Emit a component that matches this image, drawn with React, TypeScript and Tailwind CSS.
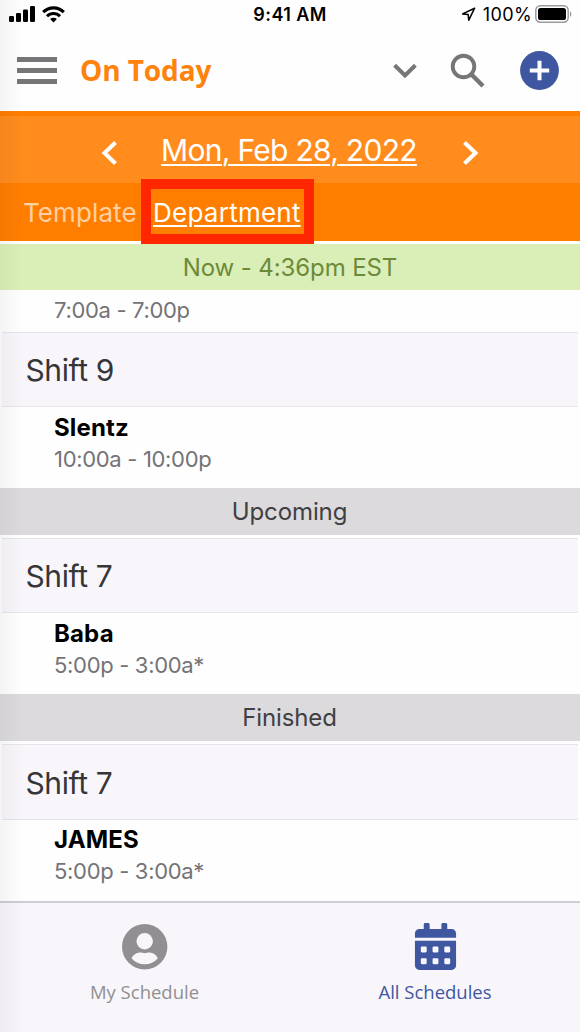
import { FaCalendarAlt } from "react-icons/fa";
import clsx from "clsx";

interface IEntry {
  name?: string;
  time: string;
}

interface IShift {
  title: string;
  entries: IEntry[];
}

interface ISection {
  label: string;
  shifts: IShift[];
}

const sections: ISection[] = [
  {
    label: "Upcoming",
    shifts: [
      { title: "Shift 7", entries: [{ name: "Baba", time: "5:00p - 3:00a*" }] },
    ],
  },
  {
    label: "Finished",
    shifts: [
      {
        title: "Shift 7",
        entries: [{ name: "JAMES", time: "5:00p - 3:00a*" }],
      },
    ],
  },
];

const StatusBar = () => (
  <div className="flex h-7 shrink-0 items-center justify-between pl-[9px] pr-[9px] text-black">
    <div className="flex w-[200px] items-center gap-[7px]">
      <svg width="26" height="16" viewBox="0 0 26 16" fill="currentColor">
        <rect x="0" y="10" width="5" height="6" rx="1.3" />
        <rect x="7" y="7" width="5" height="9" rx="1.3" />
        <rect x="14" y="3.5" width="5" height="12.5" rx="1.3" />
        <rect x="21" y="0" width="5" height="16" rx="1.3" />
      </svg>
      <svg width="23" height="17" viewBox="0 0 23 17" fill="none">
        <path
          d="M1.2 6.1a14.6 14.6 0 0 1 20.6 0"
          stroke="currentColor"
          strokeWidth="3.2"
        />
        <path
          d="M5 10.2a9.2 9.2 0 0 1 13 0"
          stroke="currentColor"
          strokeWidth="3"
        />
        <path d="M11.5 16.5l-3.4-3.4a4.8 4.8 0 0 1 6.8 0z" fill="currentColor" />
      </svg>
    </div>
    <span className="whitespace-nowrap text-[18px] font-semibold tracking-[0.4px]">
      9:41 AM
    </span>
    <div className="flex w-[200px] items-center justify-end">
      <svg width="15" height="15" viewBox="0 0 15 15" fill="none">
        <path
          d="M13.6 1.2L1.6 6.9l5.6.6.5 5.8z"
          stroke="currentColor"
          strokeWidth="1.5"
          strokeLinejoin="round"
        />
      </svg>
      <span className="ml-[7px] text-[18px] tracking-[0.4px]">100%</span>
      <svg
        className="-mr-px ml-[3px]"
        width="37"
        height="18"
        viewBox="0 0 37 18"
        fill="none"
      >
        <rect
          x="0.8"
          y="0.8"
          width="32.4"
          height="16.4"
          rx="4.6"
          stroke="#9b9b9b"
          strokeWidth="1.5"
        />
        <rect x="3" y="3" width="28" height="12" rx="2.6" fill="currentColor" />
        <path d="M35 6.2c1.8.8 1.8 4.8 0 5.6z" fill="#9b9b9b" />
      </svg>
    </div>
  </div>
);

const Header = () => (
  <header className="flex h-[83px] shrink-0 items-center pl-[17px] pr-[21px] pt-0.5 text-[#767577]">
    <button className="flex flex-col gap-[6.5px]">
      <span className="h-[4.5px] w-10 bg-current" />
      <span className="h-[4.5px] w-10 bg-current" />
      <span className="h-[4.5px] w-10 bg-current" />
    </button>
    <h1 className="-mt-0.5 ml-[23px] flex-1 font-['Open_Sans',sans-serif] text-[28px] font-bold tracking-[-0.1px] text-[#ff820d]">
      On Today
    </h1>
    <svg width="24" height="16" viewBox="0 0 24 16" fill="none">
      <path d="M1.6 2.2L12 12.4 22.4 2.2" stroke="currentColor" strokeWidth="4" />
    </svg>
    <svg className="ml-[33px]" width="36" height="36" viewBox="0 0 36 36" fill="none">
      <circle cx="13.5" cy="13.5" r="10.8" stroke="currentColor" strokeWidth="3.9" />
      <path d="M21.5 21.5L33 33" stroke="currentColor" strokeWidth="4.4" />
    </svg>
    <svg className="-mt-px ml-[34px]" width="39" height="39" viewBox="0 0 39 39">
      <circle cx="19.5" cy="19.5" r="19.4" fill="#3f56a1" />
      <path d="M19.5 9.8v19.4M9.8 19.5h19.4" stroke="#fff" strokeWidth="4" />
    </svg>
  </header>
);

const DateBar = () => (
  <div className="flex h-[72px] shrink-0 items-center border-t-[5px] border-[#ff7e00] bg-[#ff8c1d] pl-[101px] pt-1 text-white">
    <svg className="mt-0.5" width="18" height="26" viewBox="0 0 18 26" fill="none">
      <path d="M14.5 2.5L3.5 13l11 10.5" stroke="currentColor" strokeWidth="4" />
    </svg>
    <span className="-mt-0.5 ml-[42px] w-[257px] whitespace-nowrap text-[30px] tracking-[-0.7px] underline decoration-2 underline-offset-3">
      Mon, Feb 28, 2022
    </span>
    <svg className="mt-0.5 ml-[43px]" width="18" height="26" viewBox="0 0 18 26" fill="none">
      <path d="M3.5 2.5L14.5 13l-11 10.5" stroke="currentColor" strokeWidth="4" />
    </svg>
  </div>
);

const ViewTabs = () => (
  <div className="relative flex h-[58px] shrink-0 items-center bg-[#ff7e00] pl-[23px] text-[26px]">
    <span className="w-[130px] tracking-[0.1px] text-[#ffd0a1]">Template</span>
    <span className="tracking-[0.25px] text-white underline decoration-2 underline-offset-3">
      Department
    </span>
    {/* callout drawn over the active tab */}
    <div className="absolute -top-1 left-[141px] h-[65px] w-[173px] border-[10px] border-[#ff2600]" />
  </div>
);

const ShiftTitle = ({ title }: { title: string }) => (
  <div className="mx-0.5 flex h-[75.5px] shrink-0 items-center border-y-[1.5px] border-[#e6e5e8] bg-[#f8f6fa] pl-[23.5px] pt-0.5 text-[30px] tracking-[-0.4px] text-[#363538]">
    {title}
  </div>
);

const Entry = ({ name, time }: IEntry) => (
  <div
    className={clsx(
      "shrink-0 pl-[54px]",
      name ? "h-[81px] pt-[4.7px]" : "h-[41.7px] pt-1"
    )}
  >
    {name && (
      <p className="text-[24px] leading-8 font-bold tracking-[0.15px] text-black">
        {name}
      </p>
    )}
    <p
      className={clsx(
        "text-[22px] leading-8 tracking-[-0.32px] text-[#747376]",
        name && "-mt-px"
      )}
    >
      {time}
    </p>
  </div>
);

const SectionBar = ({ label, now }: { label: string; now?: boolean }) => (
  <div
    className={clsx(
      "flex shrink-0 items-center justify-center text-[24px] tracking-[-0.1px]",
      now
        ? "mt-[3px] h-[46px] bg-[#daefb8] pt-px text-[#6c8a38]"
        : "mb-[3px] h-[46.8px] bg-[#dcdadd] pt-px pr-px text-[#403f42]"
    )}
  >
    {label}
  </div>
);

const TabBar = () => (
  <nav className="flex h-[131px] shrink-0 border-t-2 border-[#cfcdd2] bg-[#f8f6fa] font-['Open_Sans',sans-serif] text-[18.5px]">
    <div className="flex w-[289px] flex-col items-center pt-[21px] text-[#918f92]">
      <svg width="46" height="46" viewBox="0 0 46 46">
        <circle cx="22.7" cy="22.7" r="22.7" fill="currentColor" />
        <circle cx="22.7" cy="17.2" r="8.2" fill="#f8f6fa" />
        <path
          d="M9.5 34.3c1.8-3.7 5.4-5.8 8.8-5.8 1.6 0 2.8.7 4.4.7s2.8-.7 4.4-.7c3.4 0 7 2.1 8.8 5.8-3.6 4.1-8 6-13.2 6s-9.6-1.9-13.2-6z"
          fill="#f8f6fa"
        />
      </svg>
      <span className="mt-[9px] leading-[26px]">My Schedule</span>
    </div>
    <div className="flex flex-1 flex-col items-center pt-5 pl-px text-[#3f56a1]">
      <FaCalendarAlt size={47} />
      <span className="mt-[9px] leading-[26px]">All Schedules</span>
    </div>
  </nav>
);

export default function App() {
  return (
    <div className="relative flex h-[1032px] w-[580px] flex-col overflow-hidden bg-[#fefefe] font-[Inter,sans-serif]">
      <StatusBar />
      <Header />
      <DateBar />
      <ViewTabs />
      <main className="flex min-h-0 flex-1 flex-col overflow-hidden">
        <SectionBar label="Now - 4:36pm EST" now />
        <Entry time="7:00a - 7:00p" />
        <ShiftTitle title="Shift 9" />
        <Entry name="Slentz" time="10:00a - 10:00p" />
        {sections.map((section) => (
          <section key={section.label} className="shrink-0">
            <SectionBar label={section.label} />
            {section.shifts.map((shift) => (
              <div key={shift.title}>
                <ShiftTitle title={shift.title} />
                {shift.entries.map((entry) => (
                  <Entry key={entry.name} {...entry} />
                ))}
              </div>
            ))}
          </section>
        ))}
      </main>
      <TabBar />
      {/* soft shade along the left edge */}
      <div className="pointer-events-none absolute inset-y-0 left-0 w-6 bg-linear-to-r from-black/4 to-transparent" />
    </div>
  );
}
